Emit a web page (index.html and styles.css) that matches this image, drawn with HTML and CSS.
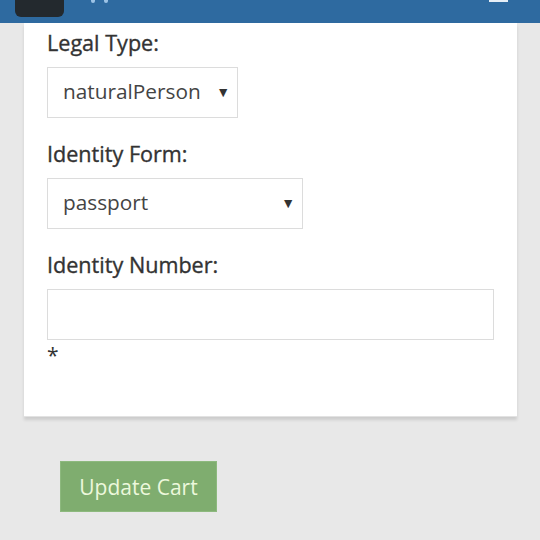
FILE: index.html
```html
<!DOCTYPE html>
<html>
<head>
<meta charset="utf-8">
<link rel="stylesheet" href="styles.css">
</head>
<body>
<header class="topbar">
  <div class="logo"></div>
  <div class="brand"><span class="dot"></span><span class="dot"></span></div>
  <div class="burger"></div>
</header>
<main class="page">
  <section class="card">
    <div class="group">
      <label class="label">Legal Type:</label>
      <div class="select select-sm"><span class="val">naturalPerson</span><span class="arrow">▼</span></div>
    </div>
    <div class="group">
      <label class="label">Identity Form:</label>
      <div class="select select-md"><span class="val">passport</span><span class="arrow">▼</span></div>
    </div>
    <div class="group last">
      <label class="label">Identity Number:</label>
      <input class="input" type="text">
      <div class="req">*</div>
    </div>
  </section>
  <div class="actions">
    <button class="btn">Update Cart</button>
  </div>
</main>
</body>
</html>
```
FILE: styles.css
```css
* { box-sizing: border-box; }
html, body { margin: 0; padding: 0; }
body {
  background: #e8e8e8;
  font-family: "Open Sans", "Noto Sans", sans-serif;
  color: #333;
  width: 540px;
  height: 540px;
  overflow: hidden;
}
.topbar {
  height: 23px;
  background: #2e6aa0;
  display: flex;
  align-items: flex-start;
  padding-left: 15px;
  padding-right: 32px;
}
.logo {
  width: 49px;
  height: 17px;
  background: #23292e;
  border-radius: 0 0 6px 6px;
}
.brand {
  display: flex;
  gap: 9px;
  margin-left: 27px;
}
.dot {
  width: 4px;
  height: 3px;
  background: #9cc3e6;
  border-radius: 0 0 2px 2px;
}
.burger {
  margin-left: auto;
  width: 19px;
  height: 2px;
  background: #e6eef6;
}
.page {
  padding: 0 23px 0 24px;
}
.card {
  background: #fff;
  padding: 6px 23px 47px 23px;
  box-shadow: 0 3px 3px rgba(0,0,0,0.12);
  border-bottom: 1px solid #e2e2e2;
}
.group { margin-bottom: 22px; }
.group.last { margin-bottom: 0; }
.label {
  display: block;
  font-size: 21.6px;
  line-height: 28px;
  font-weight: 400;
  -webkit-text-stroke: 0.35px #333;
  color: #333;
  margin-bottom: 10px;
}
.select {
  height: 51px;
  border: 1px solid #dcdcdc;
  display: flex;
  align-items: center;
  justify-content: space-between;
  padding: 0 7px 3px 15px;
  font-size: 20.8px;
  color: #444;
}
.select-sm { width: 191px; }
.select-md { width: 256px; }
.arrow {
  font-size: 14px;
  color: #333;
}
.input {
  display: block;
  width: 100%;
  height: 51px;
  border: 1px solid #dcdcdc;
  margin: 0;
  background: #fff;
}
.req {
  font-size: 21px;
  line-height: 28px;
  color: #333;
  padding-top: 1px;
}
.actions {
  padding: 44px 0 0 36px;
}
.btn {
  width: 157px;
  height: 51px;
  background: #7fad6f;
  border: 1px solid #8db97e;
  color: #ecf8dc;
  font-family: "Open Sans", "Noto Sans", sans-serif;
  font-size: 21px;
  padding: 0;
}
```
